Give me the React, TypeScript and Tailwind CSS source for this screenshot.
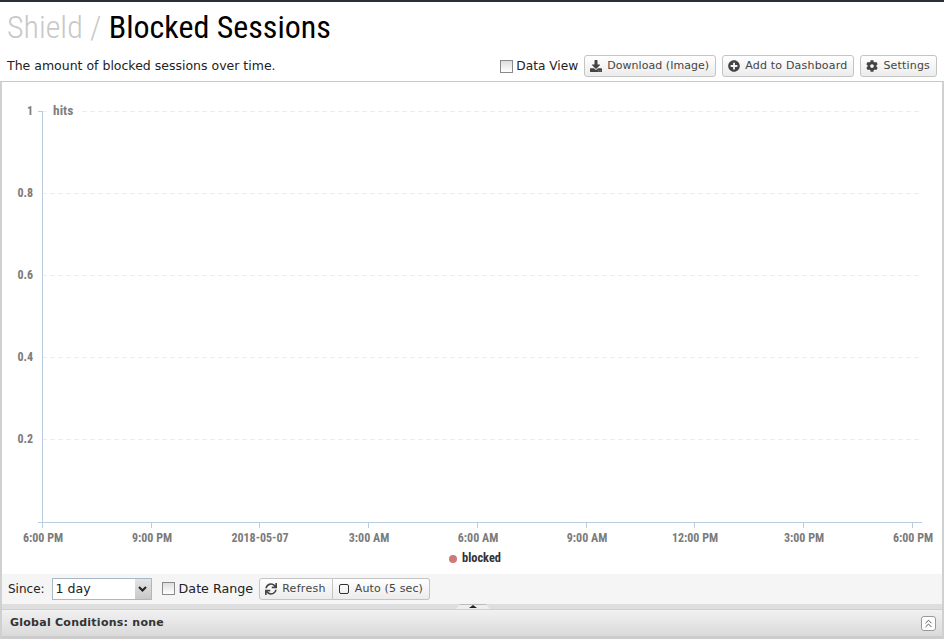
import React from "react";
import { ChevronsUp } from "lucide-react";
import { FaDownload, FaPlusCircle, FaCog, FaSync } from "react-icons/fa";

const xTicks: [number, string][] = [
  [42, "6:00 PM"],
  [151, "9:00 PM"],
  [259, "2018-05-07"],
  [368, "3:00 AM"],
  [477, "6:00 AM"],
  [586, "9:00 AM"],
  [694, "12:00 PM"],
  [803, "3:00 PM"],
  [912, "6:00 PM"],
];
const yTicks: [number, string][] = [
  [29, "1"],
  [111, "0.8"],
  [193, "0.6"],
  [275, "0.4"],
  [357, "0.2"],
];

function Chart() {
  const font = { fontFamily: "Roboto, sans-serif", fontStretch: "75%" } as React.CSSProperties;
  return (
    <svg width="940" height="491" viewBox="0 0 940 491" className="block">
      {yTicks.map(([y]) => (
        <line key={y} x1="40" x2="920" y1={y + 0.5} y2={y + 0.5} stroke="#ededed" strokeDasharray="5 3" />
      ))}
      <rect x="48" y="20" width="28" height="18" fill="#fff" />
      <line x1="40.5" x2="40.5" y1="29" y2="441" stroke="#b9cce0" />
      <line x1="36" x2="920" y1="440.5" y2="440.5" stroke="#b9cce0" />
      <line x1="36" x2="41" y1="29.5" y2="29.5" stroke="#b9cce0" />
      {xTicks.map(([x]) => (
        <line key={x} x1={x - 1.5} x2={x - 1.5} y1="440" y2="446" stroke="#b9cce0" />
      ))}
      {yTicks.map(([y, t]) => (
        <text key={y} x="31" y={y + 4} textAnchor="end" fontSize="12" fontWeight="700" fill="#7b7b7b" style={font}>
          {t}
        </text>
      ))}
      <text x="51" y="33" fontSize="13.5" fontWeight="700" fill="#7f7f7f" style={font}>hits</text>
      {xTicks.map(([x, t]) => (
        <text key={x + t} x={x - 1} y="460" textAnchor="middle" fontSize="12" fontWeight="700" fill="#7b7b7b" style={font}>
          {t}
        </text>
      ))}
      <circle cx="451" cy="477" r="4" fill="#cc7a7a" />
      <text x="460" y="480" fontSize="12.4" fontWeight="700" fill="#333" style={font}>blocked</text>
    </svg>
  );
}

function Btn({ icon, children, className = "" }: { icon: React.ReactNode; children: React.ReactNode; className?: string }) {
  return (
    <div className={"flex h-[22px] items-center border border-[#c4c4c4] rounded-[3px] bg-gradient-to-b from-white to-[#ececec] text-[11px] text-[#444] " + className}>
      {icon}
      <span>{children}</span>
    </div>
  );
}

const Box = () => <span className="h-[13px] w-[13px] border border-[#8a8a8a] bg-gradient-to-b from-[#ddd] to-white" />;

export default function App() {
  return (
    <div className="flex h-[639px] w-[944px] flex-col overflow-hidden border-t-2 border-t-[#2a2f38] bg-white font-['DejaVu_Sans',sans-serif] text-[13px] text-[#222]">
      <h1 className="h-[50px] pl-[7px] pt-[6px] font-['Roboto',sans-serif] text-[32px] leading-[38px] font-normal text-black [font-stretch:75%]">
        <span className="font-light text-[#c8c8c8]">Shield /</span> <span>Blocked Sessions</span>
      </h1>
      <div className="flex h-[29px] items-start justify-between pl-[7px] pr-[7px]">
        <span className="pt-[5px] text-[12.5px] leading-[18px]">The amount of blocked sessions over time.</span>
        <div className="flex items-start gap-[6px] pt-[3px]">
          <label className="flex h-[22px] items-center gap-[3px]">
            <Box />
            <span className="text-[12.2px]">Data View</span>
          </label>
          <Btn className="gap-[5px] pl-[5px] pr-[6px] tracking-[0.05px]" icon={<FaDownload size={12} />}>Download (Image)</Btn>
          <Btn className="gap-[5px] pl-[5px] pr-[6px] tracking-[0.2px]" icon={<FaPlusCircle size={12} />}>Add to Dashboard</Btn>
          <Btn className="gap-[5px] pl-[5px] pr-[6px] tracking-[0.18px]" icon={<FaCog size={12} />}>Settings</Btn>
        </div>
      </div>
      <div className="flex-1 border-t border-x-2 border-[#d0d0d0] border-t-[#c8c8c8]">
        <Chart />
      </div>
      <div className="flex h-[30px] items-center gap-[7px] border-x-2 border-[#d0d0d0] bg-[#f5f5f5] pl-[6px]">
        <span className="text-[12px]">Since:</span>
        <div className="flex h-[22px] w-[100px] items-stretch border border-[#a9b8c6] bg-white">
          <span className="flex-1 pl-[3px] text-[12.6px] leading-[20px]">1 day</span>
          <span className="flex w-[16px] items-center justify-center bg-gradient-to-b from-[#e4e4e4] to-[#c8c8c8]">
            <svg width="9" height="6" viewBox="0 0 9 6"><path d="M1 1l3.5 3.5L8 1" fill="none" stroke="#222" strokeWidth="2" /></svg>
          </span>
        </div>
        <label className="ml-[3px] flex items-center gap-[4px]">
          <Box />
          <span className="text-[12.7px]">Date Range</span>
        </label>
        <div className="-ml-[1px] flex h-[22px]">
          <Btn className="gap-[5px] rounded-r-none pl-[5px] pr-[6px] tracking-[0.3px]" icon={<FaSync size={12} />}>Refresh</Btn>
          <Btn className="gap-[6px] rounded-l-none border-l-0 pl-[6px] pr-[6px] tracking-[0.13px]" icon={<span className="h-[10px] w-[10px] rounded-[2px] border border-[#333]" />}>Auto (5 sec)</Btn>
        </div>
      </div>
      <div className="relative h-[6px] border-x-2 border-[#d0d0d0] border-b border-b-[#cfcfcf] bg-[#dedede]">
        <div className="absolute left-[454px] top-[0px] flex h-[5px] w-[34px] justify-center border-t border-[#bbb] bg-[#eeeeee] [clip-path:polygon(4px_0,30px_0,100%_100%,0_100%)]">
          <span className="h-0 w-0 border-x-[4px] border-b-[3px] border-x-transparent border-b-[#222]" />
        </div>
      </div>
      <div className="flex h-[26px] items-center justify-between border-x-2 border-[#d0d0d0] bg-gradient-to-b from-[#f1f1f1] to-[#dadada] pl-[8px] pr-[6px]">
        <span className="text-[11px] font-bold tracking-[0.25px] text-[#333]">Global Conditions: none</span>
        <span className="flex h-[15px] w-[15px] items-center justify-center rounded-[3px] border border-[#999] bg-white">
          <ChevronsUp size={13} strokeWidth={1.8} className="text-[#555]" />
        </span>
      </div>
      <div className="h-[3px] border-x-2 border-[#d0d0d0] bg-[#ccc]" />
    </div>
  );
}
